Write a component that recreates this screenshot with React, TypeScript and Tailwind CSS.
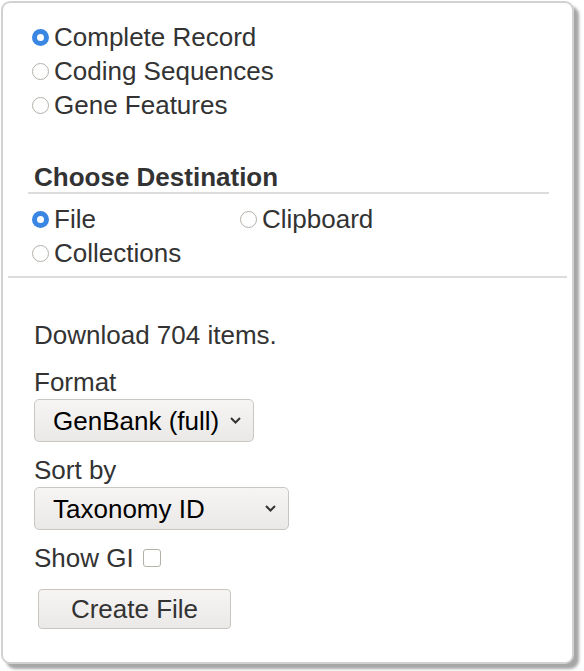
const font = { fontFamily: '"Liberation Sans", Arial, sans-serif' };

function Radio({ checked, label }: { checked?: boolean; label: string }) {
  return (
    <label className="flex h-[34px] items-center gap-[5px]">
      {checked ? (
        <span className="flex h-[17px] w-[17px] items-center justify-center rounded-full bg-[#3a86e3]">
          <span className="h-[7px] w-[7px] rounded-full bg-white" />
        </span>
      ) : (
        <span className="h-[17px] w-[17px] rounded-full border border-[#b5b0aa] bg-white" />
      )}
      <span>{label}</span>
    </label>
  );
}

function Chevron() {
  return (
    <svg width="11" height="7" viewBox="0 0 11 7" aria-hidden="true">
      <path d="M1 1l4.5 4.5L10 1" fill="none" stroke="#333" strokeWidth="2" />
    </svg>
  );
}

function FakeSelect({ value, width }: { value: string; width: string }) {
  return (
    <div
      className={`flex h-[43px] items-center justify-between rounded-[5px] border border-[#c9c6c2] bg-[linear-gradient(#f6f5f4,#ebe9e7)] pl-[18px] pr-[12px] text-black ${width}`}
    >
      <span>{value}</span>
      <Chevron />
    </div>
  );
}

export default function App() {
  return (
    <div className="min-h-[671px] w-[584px] bg-white text-[26px] leading-[30px] text-[#333]" style={font}>
      <div className="ml-px mt-px h-[663px] w-[573px] rounded-[9px] border-2 border-[#d2d2d2] bg-white px-[5px] pt-[17px] shadow-[5px_5px_3px_rgba(0,0,0,0.35)]">
        <div className="ml-[20px] w-[521px]">
          <div className="pl-[4px]">
            <Radio checked label="Complete Record" />
            <Radio label="Coding Sequences" />
            <Radio label="Gene Features" />
          </div>

          <h3 className="mt-[40px] border-b-2 border-[#dcdcdc] pl-[6px] font-bold leading-[30px]">
            Choose Destination
          </h3>

          <div className="mt-[8px] grid grid-cols-[208px_1fr] pl-[4px]">
            <Radio checked label="File" />
            <Radio label="Clipboard" />
            <Radio label="Collections" />
          </div>
        </div>

        <div className="mt-[6px] border-t-2 border-[#dcdcdc]" />

        <div className="pl-[26px] pt-[42px]">
          <p>Download 704 items.</p>

          <div className="mt-[17px]">Format</div>
          <div className="mt-[2px]">
            <FakeSelect value="GenBank (full)" width="w-[220px]" />
          </div>

          <div className="mt-[13px]">Sort by</div>
          <div className="mt-[2px]">
            <FakeSelect value="Taxonomy ID" width="w-[255px]" />
          </div>

          <div className="mt-[13px] flex items-center gap-[9px]">
            <span>Show GI</span>
            <span className="h-[18px] w-[18px] rounded-[3px] border border-[#b5b0aa] bg-white" />
          </div>

          <button className="ml-[4px] mt-[16px] flex h-[40px] w-[193px] items-center justify-center rounded-[4px] border border-[#c9c6c2] bg-[linear-gradient(#f6f5f4,#ebe9e7)] text-[#333]">
            Create File
          </button>
        </div>
      </div>
    </div>
  );
}
